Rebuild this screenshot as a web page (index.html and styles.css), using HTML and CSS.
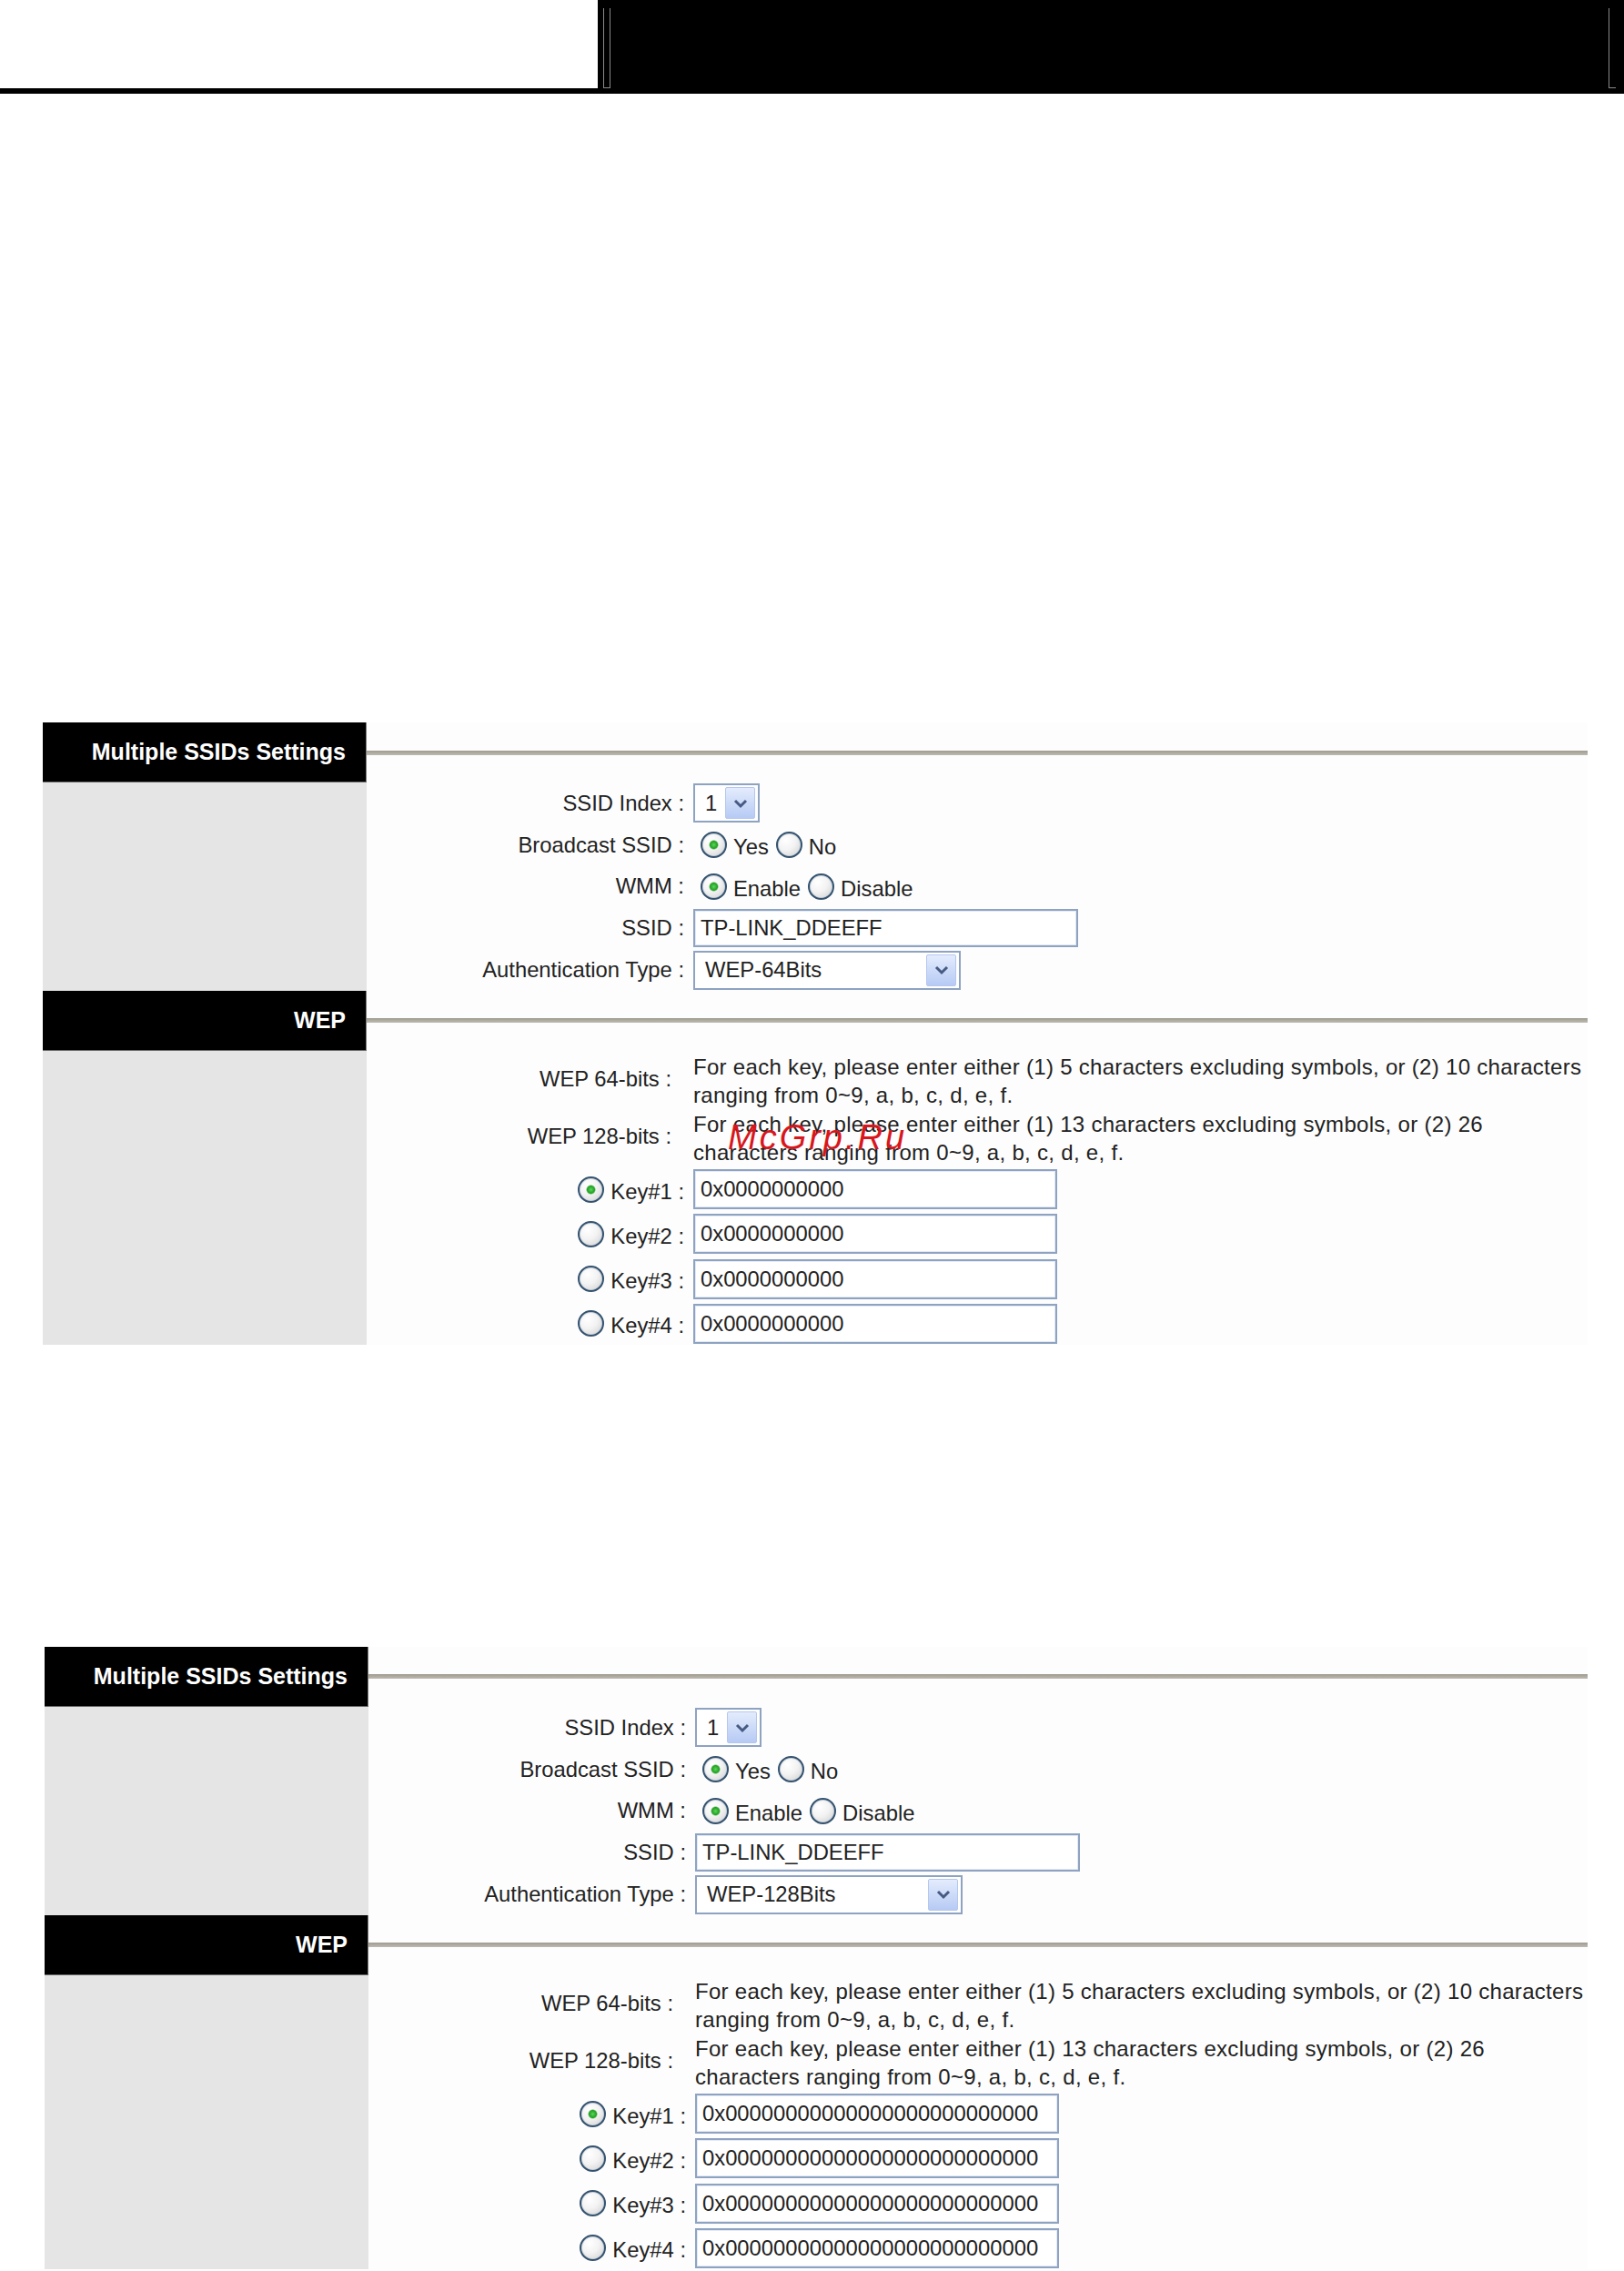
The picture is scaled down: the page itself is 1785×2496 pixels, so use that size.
FILE: index.html
```html
<!DOCTYPE html>
<html lang="en">
<head>
<meta charset="utf-8">
<title>Multiple SSIDs Settings</title>
<link rel="stylesheet" href="styles.css">
</head>
<body>
<header class="top">
  <div class="brand"></div>
  <div class="bar">
    <span class="bar-tab"></span>
    <span class="bar-tick"></span>
  </div>
</header>

<main class="page">
  <!-- WEP 64-bit example -->
  <section class="panel panel-64">
    <div class="side-head">Multiple SSIDs Settings</div>
    <div class="rule"></div>
    <div class="side"></div>
    <div class="form">
      <div class="label">SSID Index :</div>
      <div class="ctl">
        <div class="select select-sm"><span>1</span><span class="select-btn"><svg width="16" height="12" viewBox="0 0 16 12"><polyline points="2,3 8,9 14,3" fill="none" stroke="#465a82" stroke-width="3"/></svg></span></div>
      </div>
      <div class="label">Broadcast SSID :</div>
      <div class="ctl">
        <label class="opt"><input class="radio" type="radio" name="b1" checked><span class="opt-text">Yes</span></label>
        <label class="opt"><input class="radio" type="radio" name="b1"><span class="opt-text">No</span></label>
      </div>
      <div class="label">WMM :</div>
      <div class="ctl">
        <label class="opt"><input class="radio" type="radio" name="w1" checked><span class="opt-text">Enable</span></label>
        <label class="opt"><input class="radio" type="radio" name="w1"><span class="opt-text">Disable</span></label>
      </div>
      <div class="label">SSID :</div>
      <div class="ctl"><input class="field field-ssid" type="text" value="TP-LINK_DDEEFF"></div>
      <div class="label">Authentication Type :</div>
      <div class="ctl">
        <div class="select select-lg"><span>WEP-64Bits</span><span class="select-btn"><svg width="16" height="12" viewBox="0 0 16 12"><polyline points="2,3 8,9 14,3" fill="none" stroke="#465a82" stroke-width="3"/></svg></span></div>
      </div>
    </div>

    <div class="side-head">WEP</div>
    <div class="rule"></div>
    <div class="side"></div>
    <div class="form form-wep">
      <div class="label label-wep">WEP 64-bits :</div>
      <div class="desc">For each key, please enter either (1) 5 characters excluding symbols, or (2) 10 characters<br>ranging from 0~9, a, b, c, d, e, f.</div>
      <div class="label label-wep">WEP 128-bits :</div>
      <div class="desc">For each key, please enter either (1) 13 characters excluding symbols, or (2) 26<br>characters ranging from 0~9, a, b, c, d, e, f.</div>
      <label class="key-label"><input class="radio" type="radio" name="k1" checked><span class="opt-text">Key#1 :</span></label>
      <div class="ctl"><input class="field field-key" type="text" value="0x0000000000"></div>
      <label class="key-label"><input class="radio" type="radio" name="k1"><span class="opt-text">Key#2 :</span></label>
      <div class="ctl"><input class="field field-key" type="text" value="0x0000000000"></div>
      <label class="key-label"><input class="radio" type="radio" name="k1"><span class="opt-text">Key#3 :</span></label>
      <div class="ctl"><input class="field field-key" type="text" value="0x0000000000"></div>
      <label class="key-label"><input class="radio" type="radio" name="k1"><span class="opt-text">Key#4 :</span></label>
      <div class="ctl"><input class="field field-key" type="text" value="0x0000000000"></div>
    </div>

    <div class="stamp">McGrp.Ru</div>
  </section>

  <!-- WEP 128-bit example -->
  <section class="panel panel-128">
    <div class="side-head">Multiple SSIDs Settings</div>
    <div class="rule"></div>
    <div class="side"></div>
    <div class="form">
      <div class="label">SSID Index :</div>
      <div class="ctl">
        <div class="select select-sm"><span>1</span><span class="select-btn"><svg width="16" height="12" viewBox="0 0 16 12"><polyline points="2,3 8,9 14,3" fill="none" stroke="#465a82" stroke-width="3"/></svg></span></div>
      </div>
      <div class="label">Broadcast SSID :</div>
      <div class="ctl">
        <label class="opt"><input class="radio" type="radio" name="b2" checked><span class="opt-text">Yes</span></label>
        <label class="opt"><input class="radio" type="radio" name="b2"><span class="opt-text">No</span></label>
      </div>
      <div class="label">WMM :</div>
      <div class="ctl">
        <label class="opt"><input class="radio" type="radio" name="w2" checked><span class="opt-text">Enable</span></label>
        <label class="opt"><input class="radio" type="radio" name="w2"><span class="opt-text">Disable</span></label>
      </div>
      <div class="label">SSID :</div>
      <div class="ctl"><input class="field field-ssid" type="text" value="TP-LINK_DDEEFF"></div>
      <div class="label">Authentication Type :</div>
      <div class="ctl">
        <div class="select select-lg"><span>WEP-128Bits</span><span class="select-btn"><svg width="16" height="12" viewBox="0 0 16 12"><polyline points="2,3 8,9 14,3" fill="none" stroke="#465a82" stroke-width="3"/></svg></span></div>
      </div>
    </div>

    <div class="side-head">WEP</div>
    <div class="rule"></div>
    <div class="side"></div>
    <div class="form form-wep">
      <div class="label label-wep">WEP 64-bits :</div>
      <div class="desc">For each key, please enter either (1) 5 characters excluding symbols, or (2) 10 characters<br>ranging from 0~9, a, b, c, d, e, f.</div>
      <div class="label label-wep">WEP 128-bits :</div>
      <div class="desc">For each key, please enter either (1) 13 characters excluding symbols, or (2) 26<br>characters ranging from 0~9, a, b, c, d, e, f.</div>
      <label class="key-label"><input class="radio" type="radio" name="k2" checked><span class="opt-text">Key#1 :</span></label>
      <div class="ctl"><input class="field field-key" type="text" value="0x00000000000000000000000000"></div>
      <label class="key-label"><input class="radio" type="radio" name="k2"><span class="opt-text">Key#2 :</span></label>
      <div class="ctl"><input class="field field-key" type="text" value="0x00000000000000000000000000"></div>
      <label class="key-label"><input class="radio" type="radio" name="k2"><span class="opt-text">Key#3 :</span></label>
      <div class="ctl"><input class="field field-key" type="text" value="0x00000000000000000000000000"></div>
      <label class="key-label"><input class="radio" type="radio" name="k2"><span class="opt-text">Key#4 :</span></label>
      <div class="ctl"><input class="field field-key" type="text" value="0x00000000000000000000000000"></div>
    </div>
  </section>
</main>
</body>
</html>
```

FILE: styles.css
```css
* {
  box-sizing: border-box;
}

html, body {
  margin: 0;
  background: #fff;
}

body {
  font-family: "Liberation Sans", Arial, sans-serif;
  color: #222;
  overflow: hidden;
}

/* top banner */
.top {
  display: flex;
  height: 103px;
}

.brand {
  width: 657px;
  background: #fff;
  border-bottom: 6px solid #000;
}

.bar {
  flex: 1;
  background: #000;
  padding: 9px 9px 6px 6px;
  display: flex;
  justify-content: space-between;
}

.bar-tab {
  width: 8px;
  border: 1px solid #8a8a8a;
  border-top: 0;
}

.bar-tick {
  width: 8px;
  border-left: 1px solid #8a8a8a;
  border-bottom: 1px solid #8a8a8a;
}

/* settings panels */
.page {
  padding-top: 691px;
}

.panel {
  position: relative;
  display: grid;
  grid-template-columns: 356px 1342px;
  margin-left: 47px;
}

.panel-128 {
  margin-top: 332px;
  margin-left: 49px;
  grid-template-columns: 356px 1340px;
}

.side-head {
  height: 66px;
  background: #000;
  color: #fff;
  font-weight: bold;
  font-size: 25px;
  display: flex;
  align-items: center;
  justify-content: flex-end;
  padding-right: 22px;
  border-right: 1px solid #7a7a7a;
  border-bottom: 1px solid #6a6a6a;
}

.rule {
  display: flex;
  align-items: center;
  background: #fdfdfd;
}

.rule::after {
  content: "";
  flex: 1;
  height: 5px;
  background: linear-gradient(#9f9b90, #bdbab1);
}

.side {
  background: #e5e5e5;
}

.form {
  display: grid;
  grid-template-columns: 349px 1fr;
  grid-template-rows: repeat(5, 45.8px);
  column-gap: 10px;
  align-items: center;
  font-size: 23.8px;
  background: #fdfdfd;
}

.form-wep {
  grid-template-rows: 63px 63px repeat(4, 49.25px);
}

.label {
  text-align: right;
  white-space: nowrap;
}

.label-wep {
  padding-right: 14px;
}

.ctl {
  display: flex;
  align-items: center;
}

.desc {
  font-size: 24px;
  letter-spacing: 0.3px;
  line-height: 31.5px;
  white-space: nowrap;
  padding-top: 4px;
}

/* select boxes */
.select {
  height: 43px;
  border: 2px solid #8ea3c1;
  background: #fff;
  display: flex;
  align-items: center;
  justify-content: space-between;
  padding: 0 3px 0 11px;
}

.select-sm {
  width: 73px;
}

.select-lg {
  width: 294px;
}

.select-btn {
  width: 33px;
  height: 35px;
  border: 1px solid #b5c7ee;
  border-radius: 2px;
  background: linear-gradient(#e4ecfd, #b6caf4);
  display: flex;
  align-items: center;
  justify-content: center;
}

/* text fields */
.field {
  height: 42px;
  border: 2px solid #8ea3c1;
  box-shadow: inset 0 0 0 1px #e4eaf3;
  background: #fff;
  padding: 0 6px;
  font-family: inherit;
  font-size: 23.8px;
  color: #222;
  outline: none;
}

.field-ssid {
  width: 423px;
}

.field-key {
  width: 400px;
  height: 44px;
  margin-top: 3px;
}

/* radio buttons */
.radio {
  appearance: none;
  -webkit-appearance: none;
  width: 29px;
  height: 29px;
  margin: 0 7px 0 0;
  border-radius: 50%;
  border: 2px solid #34526f;
  box-shadow: inset 0 0 0 1px #c8d2dc;
  background: radial-gradient(circle at 35% 30%, #fff 0, #f3f3f3 45%, #cdcdcd 100%);
  flex: none;
}

.radio:checked {
  background:
    radial-gradient(circle, #5ad65a 0, #22a022 4px, rgba(34, 160, 34, 0) 5.5px),
    radial-gradient(circle at 35% 30%, #fff 0, #f3f3f3 45%, #cdcdcd 100%);
}

.opt {
  display: flex;
  align-items: center;
  margin-left: 8px;
}

.opt + .opt {
  margin-left: 8px;
}

.opt-text {
  padding-top: 5px;
}

.key-label {
  display: flex;
  align-items: center;
  justify-content: flex-end;
  white-space: nowrap;
  padding-top: 3px;
}

/* watermark stamp over the description text */
.stamp {
  position: absolute;
  left: 753px;
  top: 437px;
  font-size: 38px;
  line-height: 1;
  font-style: italic;
  letter-spacing: 3px;
  color: #d8161c;
}
```
